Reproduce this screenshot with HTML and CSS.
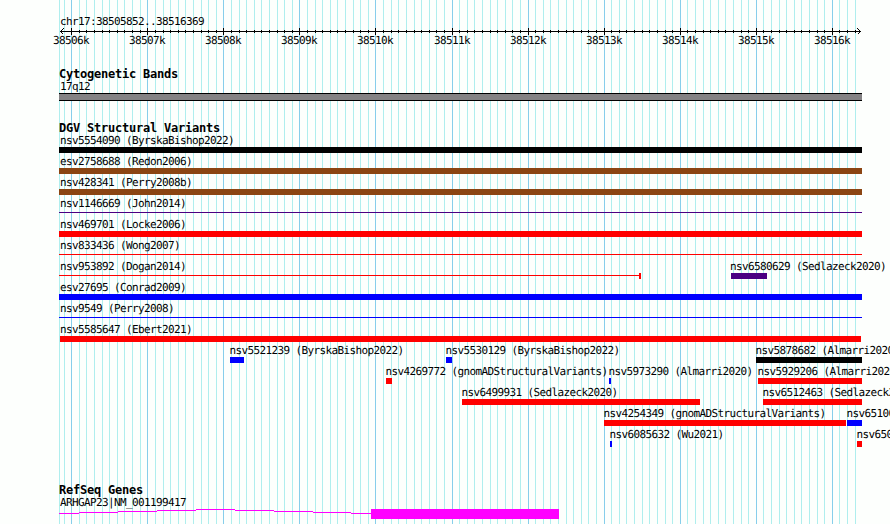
FILE: index.html
```
<!DOCTYPE html>
<html>
<head>
  <meta charset="utf-8">
  <title>chr17:38505852..38516369</title>
  <link rel="stylesheet" href="styles.css">
</head>
<body>
  <svg id="grid" class="grid" width="890" height="524"></svg>
  <div class="browser">
    <div class="ruler">
      <p class="label">chr17:38505852..38516369</p>
      <svg id="scale" class="track" width="890" height="30">
        <path class="axis" d="M60 6.5H861M63.5 3.5L60.5 6.5L63.5 9.5M857.5 3.5L860.5 6.5L857.5 9.5" />
      </svg>
    </div>

    <div class="section">
      <h2>Cytogenetic Bands</h2>
      <p class="label">17q12</p>
      <div class="band"></div>
    </div>

    <div class="section variants">
      <h2>DGV Structural Variants</h2>
      <svg class="track" width="890" height="320">
        <!-- full width variants -->
        <text x="60" y="10">nsv5554090 (ByrskaBishop2022)</text>
        <rect class="black" x="59" y="13" width="803" height="6" />
        <text x="60" y="31">esv2758688 (Redon2006)</text>
        <rect class="brown" x="59" y="34" width="803" height="6" />
        <text x="60" y="52">nsv428341 (Perry2008b)</text>
        <rect class="brown" x="59" y="55" width="803" height="6" />
        <text x="60" y="73">nsv1146669 (John2014)</text>
        <rect class="indigo" x="59" y="78" width="803" height="1" />
        <text x="60" y="94">nsv469701 (Locke2006)</text>
        <rect class="red" x="59" y="97" width="803" height="6" />
        <text x="60" y="115">nsv833436 (Wong2007)</text>
        <rect class="red" x="59" y="120" width="803" height="1" />
        <text x="60" y="136">nsv953892 (Dogan2014)</text>
        <rect class="red" x="59" y="141" width="580" height="1" />
        <rect class="red" x="639" y="139" width="2" height="6" />
        <text x="730" y="136">nsv6580629 (Sedlazeck2020)</text>
        <rect class="indigo" x="731" y="139" width="36" height="6" />
        <text x="60" y="157">esv27695 (Conrad2009)</text>
        <rect class="blue" x="59" y="160" width="803" height="6" />
        <text x="60" y="178">nsv9549 (Perry2008)</text>
        <rect class="blue" x="59" y="183" width="803" height="1" />
        <text x="60" y="199">nsv5585647 (Ebert2021)</text>
        <rect class="red" x="60" y="202" width="801" height="6" />

        <!-- partial variants -->
        <text x="229.5" y="220">nsv5521239 (ByrskaBishop2022)</text>
        <rect class="blue" x="230" y="223" width="14" height="6" />
        <text x="445.5" y="220">nsv5530129 (ByrskaBishop2022)</text>
        <rect class="blue" x="446" y="223" width="6" height="6" />
        <text x="755.5" y="220">nsv5878682 (Almarri2020)</text>
        <rect class="black" x="756" y="223" width="106" height="6" />

        <text x="385.5" y="241">nsv4269772 (gnomADStructuralVariants)</text>
        <rect class="red" x="386" y="244" width="6" height="6" />
        <text x="608.5" y="241">nsv5973290 (Almarri2020)</text>
        <rect class="blue" x="609" y="244" width="2" height="6" />
        <text x="757.5" y="241">nsv5929206 (Almarri2020)</text>
        <rect class="red" x="758" y="244" width="104" height="6" />

        <text x="461.5" y="262">nsv6499931 (Sedlazeck2020)</text>
        <rect class="red" x="462" y="265" width="238" height="6" />
        <text x="762.5" y="262">nsv6512463 (Sedlazeck2020)</text>
        <rect class="red" x="763" y="265" width="99" height="6" />

        <text x="603.5" y="283">nsv4254349 (gnomADStructuralVariants)</text>
        <rect class="red" x="604" y="286" width="242" height="6" />
        <text x="846.5" y="283">nsv6510012</text>
        <rect class="blue" x="847" y="286" width="15" height="6" />

        <text x="609.5" y="304">nsv6085632 (Wu2021)</text>
        <rect class="blue" x="610" y="307" width="2" height="6" />
        <text x="856.5" y="304">nsv6501</text>
        <rect class="red" x="857" y="307" width="5" height="6" />
      </svg>
    </div>

    <div class="section genes">
      <h2>RefSeq Genes</h2>
      <svg class="track" width="890" height="28">
        <text x="60" y="10">ARHGAP23|NM_001199417</text>
        <path class="intron" d="M59 17.5H79M79 16.5H118M118 15.5H157M157 14.5H196M196 13.5H235M235 14.5H274M274 15.5H313M313 16.5H351M351 17.5H371" />
        <rect class="magenta" x="371" y="13" width="188" height="10" />
      </svg>
    </div>
  </div>

  <script>
    let minor = '', major = '', ticks = '', labels = '';
    // one line per 100 bp, every tenth is a kb
    for (let i = -1; i <= 103; i++) {
      let x = Math.round(71.25 + i * 7.606) + 0.5;
      if (i % 10 == 0) {
        major += `M${x} 0V524`;
        ticks += `M${x} 3V10`;
        labels += `<text x="${x - 18.5}" y="19">${38506 + i / 10}k</text>`;
      } else {
        minor += `M${x} 0V524`;
        // no tick under the arrow head
        if (i > 0) ticks += `M${x} 5V8`;
      }
    }
    document.getElementById('grid').innerHTML =
      `<path class="minor" d="M59.5 0V524${minor}" /><path class="major" d="${major}" />`;
    document.getElementById('scale').innerHTML += `<path class="axis" d="${ticks}" />${labels}`;
  </script>
</body>
</html>
```
FILE: styles.css
```
body {
  margin: 0;
  background-color: #fdfffd;
  font: 11px/12px "DejaVu Sans Mono", monospace;
  letter-spacing: -0.622px;
  color: #000;
  overflow: hidden;
}

.grid {
  position: absolute;
  top: 0;
  left: 0;
}

.minor {
  stroke: #afeeee;
}

.major {
  stroke: #87ceeb;
}

.browser {
  position: relative;
  width: 890px;
  height: 524px;
  overflow: hidden;
}

.ruler {
  height: 52px;
  padding-top: 15px;
}

.label {
  margin: 0;
  padding: 1px 0 0 60px;
  height: 11px;
}

.ruler .label {
  height: 9px;
}

.track {
  display: block;
  overflow: visible;
}

text {
  text-rendering: geometricPrecision;
}

.axis {
  fill: none;
  stroke: #000;
  shape-rendering: crispEdges;
}

.section {
  height: 54px;
}

h2 {
  margin: 0;
  padding: 1px 0 0 59px;
  height: 12px;
  font-size: 12px;
  line-height: 12px;
  letter-spacing: -0.224px;
}

.band {
  box-sizing: border-box;
  width: 803px;
  height: 8px;
  margin: 1px 0 0 59px;
  border: solid #000;
  border-width: 1px 0;
  background-color: #848284;
}

.variants {
  height: 362px;
}

.black { fill: #000; }
.brown { fill: #8b4513; }
.indigo { fill: #4b0082; }
.red { fill: #f00; }
.blue { fill: #00f; }
.magenta { fill: #f0f; }

.intron {
  stroke: #f0f;
}
```
